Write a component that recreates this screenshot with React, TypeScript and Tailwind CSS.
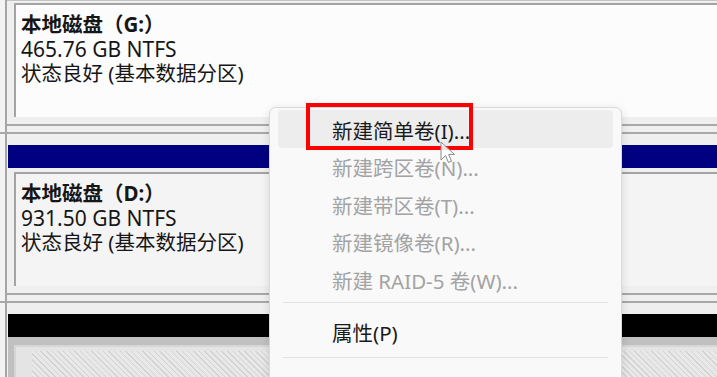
export default function App() {
  const item = "h-[37.5px] mx-[8px] rounded-[4px] pl-[54px] flex items-center pt-[4px] text-[20.5px] leading-none whitespace-nowrap";
  return (
    <div className="relative w-[717px] h-[377px] overflow-hidden bg-[#efefef] font-['Noto_Sans','Noto_Sans_CJK_SC',sans-serif] flex text-[#161616]">
      {/* left strip */}
      <div className="w-[5px] shrink-0 flex flex-col bg-[#f3f3f3]">
        <div className="h-[132px] shrink-0" />
        <div className="h-[2px] shrink-0 bg-[#a8a8a8]" />
        <div className="h-[167px] shrink-0" />
        <div className="h-[2px] shrink-0 bg-[#a8a8a8]" />
      </div>
      <div className="w-[2px] shrink-0 bg-[#a6a6a6]" />

      {/* partition column */}
      <div className="flex-1 min-w-0 flex flex-col">
        <div className="h-[3px] shrink-0 border-t border-[#c4c4c4]" />
        <div className="h-[114px] shrink-0 pl-[7px] flex">
          <div className="flex-1 border-l-2 border-t-2 border-[#a3a3a3] bg-[#fcfcfc] pl-[5px] pt-[7px] text-[20.5px] leading-[24.5px]">
            <div className="font-bold">本地磁盘（G:）</div>
            <div className="text-[21px]">465.76 GB NTFS</div>
            <div>状态良好 (基本数据分区)</div>
          </div>
        </div>
        <div className="h-[7px] shrink-0" />
        <div className="h-[2px] shrink-0 bg-[#a8a8a8]" />
        <div className="h-[6px] shrink-0" />
        <div className="h-[2px] shrink-0 bg-[#a8a8a8]" />
        <div className="h-[11px] shrink-0" />
        <div className="h-[23px] shrink-0 ml-[1px] bg-[#000080]" />
        <div className="h-[4px] shrink-0" />
        <div className="h-[114px] shrink-0 pl-[7px] flex">
          <div className="flex-1 border-l-2 border-t-2 border-[#a3a3a3] bg-[#f4f4f4] pl-[5px] pt-[7px] text-[20.5px] leading-[24.5px]">
            <div className="font-bold">本地磁盘（D:）</div>
            <div className="text-[21px]">931.50 GB NTFS</div>
            <div>状态良好 (基本数据分区)</div>
          </div>
        </div>
        <div className="h-[7px] shrink-0" />
        <div className="h-[2px] shrink-0 bg-[#a8a8a8]" />
        <div className="h-[6px] shrink-0" />
        <div className="h-[2px] shrink-0 bg-[#a8a8a8]" />
        <div className="h-[11px] shrink-0" />
        <div className="h-[23px] shrink-0 ml-[1px] bg-black" />
        <div className="flex-1 ml-[1px] bg-[#c0c0c0] pl-[6px] pt-[8px] flex">
          <div className="flex-1 border-l-2 border-t-2 border-[#d6d6d6] bg-[#e4e4e4] pl-[16px] pt-[4px] flex">
            <div className="flex-1 bg-[repeating-linear-gradient(45deg,#d2d2d2_0px,#d2d2d2_1px,#e8e8e8_1px,#e8e8e8_4px)]" />
          </div>
        </div>
      </div>

      {/* context menu */}
      <div className="absolute left-[269px] top-[107px] w-[353px] h-[300px] rounded-[7px] border border-[#dadada] bg-[#f9f9f9] shadow-[0_2px_10px_rgba(0,0,0,0.12)] pt-[2px]">
        <div className={item + " bg-[#ededed] text-[#1a1a1a]"}>新建简单卷(I)...</div>
        <div className={item + " text-[#a3a3a3]"}>新建跨区卷(N)...</div>
        <div className={item + " text-[#a3a3a3]"}>新建带区卷(T)...</div>
        <div className={item + " text-[#a3a3a3]"}>新建镜像卷(R)...</div>
        <div className={item + " text-[#a3a3a3]"}>新建 RAID-5 卷(W)...</div>
        <div className="pt-[4px] pb-[10px] mx-[13px]">
          <div className="h-px bg-[#e2e2e2]" />
        </div>
        <div className={item + " text-[#1a1a1a]"}>属性(P)</div>
        <div className="pt-[7px] pb-[8px] mx-[13px]">
          <div className="h-px bg-[#e2e2e2]" />
        </div>
        <div className={item + " text-[#1a1a1a]"}>帮助(H)</div>
      </div>

      {/* red annotation box */}
      <div className="absolute left-[306px] top-[103px] w-[167px] h-[47px] border-[4px] border-[#ff0000]" />

      {/* mouse cursor */}
      <svg className="absolute left-[440px] top-[141px]" width="18" height="26" viewBox="0 0 18 26">
        <path d="M1 1 L1 19 L5.5 14.5 L8.5 21.5 L11.5 20.2 L8.6 13.4 L14.5 13.4 Z" fill="#ffffff" fillOpacity="0.85" stroke="#8a8a8a" strokeWidth="1" strokeLinejoin="round" />
      </svg>
    </div>
  );
}
